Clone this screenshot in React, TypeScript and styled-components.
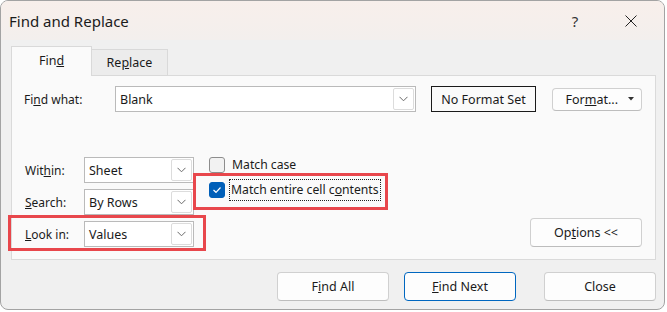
import React from "react";
import { styled, createGlobalStyle } from "styled-components";

const GlobalStyle = createGlobalStyle`
    html, body {
        margin: 0;
        padding: 0;
        background: #ffffff;
    }
    body {
        font-family: "Segoe UI", "Noto Sans", "Open Sans", sans-serif;
        font-size: 12px;
        color: #1a1a1a;
    }
`;

const Window = styled.div`
    width: 665px;
    height: 310px;
    box-sizing: border-box;
    border: 1px solid #a3a3a3;
    border-radius: 8px;
    background: #f0f0f0;
    overflow: hidden;
    display: flex;
    flex-direction: column;
`;

const TitleBar = styled.div`
    height: 39px;
    flex: none;
    display: flex;
    align-items: center;
    padding-left: 8px;
    background: linear-gradient(#f8efeb, #f3efed);
`;

const Title = styled.div`
    font-size: 15px;
    flex: 1;
    color: #1b1b1b;
`;

const TitleButton = styled.div<{ w: number }>`
    width: ${(p) => p.w}px;
    height: 39px;
    display: flex;
    align-items: center;
    justify-content: center;
    font-size: 15px;
    color: #333;
`;

const Body = styled.div`
    flex: 1;
    display: flex;
    flex-direction: column;
    padding: 0 8px 0 10px;
`;

const TabRow = styled.div`
    height: 36px;
    display: flex;
    align-items: flex-end;
    position: relative;
    z-index: 1;
    margin-bottom: -1px;
`;

const Tab = styled.div<{ active?: boolean; w: number }>`
    width: ${(p) => p.w}px;
    height: ${(p) => (p.active ? 30 : 27)}px;
    box-sizing: border-box;
    display: flex;
    align-items: center;
    justify-content: center;
    padding-bottom: ${(p) => (p.active ? 2 : 1)}px;
    border: 1px solid #d9d9d9;
    border-bottom: ${(p) => (p.active ? "none" : "1px solid #d9d9d9")};
    border-left: ${(p) => (p.active ? "1px solid #d9d9d9" : "none")};
    background: ${(p) => (p.active ? "#fafafa" : "#ececec")};
    font-size: 12.5px;
`;

const Panel = styled.div`
    height: 185px;
    box-sizing: border-box;
    border: 1px solid #dadada;
    background: #fafafa;
    padding: 10px 13px 12px 11px;
    display: flex;
    flex-direction: column;
`;

const FindRow = styled.div`
    display: flex;
    align-items: center;
`;

const Label = styled.div<{ w: number }>`
    width: ${(p) => p.w}px;
    flex: none;
    padding-left: 1px;
`;

const Combo = styled.div<{ w: number }>`
    width: ${(p) => p.w}px;
    height: 26px;
    box-sizing: border-box;
    border: 1px solid #bababa;
    background: #ffffff;
    display: flex;
    align-items: stretch;
    flex: none;
`;

const ComboText = styled.div`
    flex: 1;
    display: flex;
    align-items: center;
    padding-left: 4px;
    font-size: 12.5px;
`;

const DropButton = styled.div`
    width: 19px;
    margin: 1px;
    border: 1px solid #dcdcdc;
    border-radius: 2px;
    display: flex;
    align-items: center;
    justify-content: center;
`;

const FormatBox = styled.div`
    width: 105px;
    height: 26px;
    box-sizing: border-box;
    margin-left: 15px;
    border: 1px solid #1a1a1a;
    display: flex;
    align-items: center;
    justify-content: center;
    font-size: 12.5px;
`;

const Button = styled.div<{ w: number; h: number; primary?: boolean }>`
    width: ${(p) => p.w}px;
    height: ${(p) => p.h}px;
    box-sizing: border-box;
    border: 1px solid ${(p) => (p.primary ? "#0067c0" : "#d0d0d0")};
    border-bottom-color: ${(p) => (p.primary ? "#0067c0" : "#bdbdbd")};
    border-radius: 4px;
    background: #fdfdfd;
    display: flex;
    align-items: center;
    justify-content: center;
    font-size: 12.5px;
    flex: none;
`;

const FormatButton = styled(Button)`
    margin-left: 16px;
    justify-content: flex-end;
    padding-right: 7px;
    gap: 10px;
`;

const Lower = styled.div`
    margin-top: auto;
    display: flex;
    align-items: flex-end;
`;

const FieldColumn = styled.div`
    display: flex;
    flex-direction: column;
    gap: 6px;
    padding-left: 1px;
`;

const FieldRow = styled.div<{ highlight?: boolean }>`
    display: flex;
    align-items: center;
    position: relative;
    ${(p) =>
        p.highlight &&
        `
        &::after {
            content: "";
            position: absolute;
            top: -6px;
            left: -16px;
            right: -12px;
            bottom: -4px;
            border: 3px solid #e8474c;
            pointer-events: none;
        }
    `}
`;

const CheckColumn = styled.div`
    align-self: flex-start;
    margin-left: 15px;
    display: flex;
    flex-direction: column;
    align-items: flex-start;
    gap: 9px;
`;

const CheckRow = styled.div<{ highlight?: boolean }>`
    display: inline-flex;
    align-items: center;
    height: 16px;
    position: relative;
    ${(p) =>
        p.highlight &&
        `
        &::after {
            content: "";
            position: absolute;
            top: -9px;
            left: -16px;
            right: -7px;
            bottom: -12px;
            border: 3px solid #e8474c;
            pointer-events: none;
        }
    `}
`;

const Box = styled.div<{ checked?: boolean }>`
    width: 16px;
    height: 16px;
    box-sizing: border-box;
    border-radius: 3px;
    border: 1px solid ${(p) => (p.checked ? "#005fb8" : "#8d8d8d")};
    background: ${(p) => (p.checked ? "#005fb8" : "#f2f2f2")};
    display: flex;
    align-items: center;
    justify-content: center;
    flex: none;
`;

const CheckText = styled.div<{ focused?: boolean }>`
    margin-left: ${(p) => (p.focused ? 4 : 5)}px;
    padding: 1px 1px 2px;
    border: 1px dotted ${(p) => (p.focused ? "#222" : "transparent")};
    font-size: 12.2px;
    white-space: nowrap;
`;

const Spacer = styled.div`
    flex: 1;
`;

const Footer = styled.div`
    display: flex;
    justify-content: flex-end;
    padding-top: 12px;
`;

const Gap = styled.div<{ w: number }>`
    width: ${(p) => p.w}px;
    flex: none;
`;

function Chevron() {
    return (
        <svg width="9" height="6" viewBox="0 0 9 6">
            <polyline points="0.5,0.8 4.5,4.8 8.5,0.8" fill="none" stroke="#6a6a6a" strokeWidth="1" />
        </svg>
    );
}

function ComboBox({ w, value }: { w: number; value: string }) {
    return (
        <Combo w={w}>
            <ComboText>{value}</ComboText>
            <DropButton>
                <Chevron />
            </DropButton>
        </Combo>
    );
}

function Check({ checked }: { checked?: boolean }) {
    return (
        <Box checked={checked}>
            {checked && (
                <svg width="10" height="8" viewBox="0 0 10 8">
                    <polyline points="1.5,4 4,6.3 8.5,1.5" fill="none" stroke="#fff" strokeWidth="1.2" />
                </svg>
            )}
        </Box>
    );
}

export default function App() {
    return (
        <>
            <GlobalStyle />
            <Window>
                <TitleBar>
                    <Title>Find and Replace</Title>
                    <TitleButton w={46}>?</TitleButton>
                    <TitleButton w={66}>
                        <svg width="12" height="12" viewBox="0 0 12 12">
                            <path d="M0.5 0.5 L11.5 11.5 M11.5 0.5 L0.5 11.5" stroke="#222" strokeWidth="1" />
                        </svg>
                    </TitleButton>
                </TitleBar>
                <Body>
                    <TabRow>
                        <Tab active w={81}>
                            <span>
                                Fin<u>d</u>
                            </span>
                        </Tab>
                        <Tab w={76}>
                            <span>
                                Re<u>p</u>lace
                            </span>
                        </Tab>
                    </TabRow>
                    <Panel>
                        <FindRow>
                            <Label w={91}>
                                Fi<u>n</u>d what:
                            </Label>
                            <ComboBox w={301} value="Blank" />
                            <FormatBox>No Format Set</FormatBox>
                            <FormatButton w={90} h={23}>
                                <span>
                                    For<u>m</u>at...
                                </span>
                                <svg width="6" height="4" viewBox="0 0 6 4">
                                    <path d="M0 0 H6 L3 3.5 Z" fill="#333" />
                                </svg>
                            </FormatButton>
                        </FindRow>
                        <Lower>
                            <FieldColumn>
                                <FieldRow>
                                    <Label w={59}>
                                        Wit<u>h</u>in:
                                    </Label>
                                    <ComboBox w={110} value="Sheet" />
                                </FieldRow>
                                <FieldRow>
                                    <Label w={59}>
                                        <u>S</u>earch:
                                    </Label>
                                    <ComboBox w={110} value="By Rows" />
                                </FieldRow>
                                <FieldRow highlight>
                                    <Label w={59}>
                                        <u>L</u>ook in:
                                    </Label>
                                    <ComboBox w={110} value="Values" />
                                </FieldRow>
                            </FieldColumn>
                            <CheckColumn>
                                <CheckRow>
                                    <Check />
                                    <CheckText>Match case</CheckText>
                                </CheckRow>
                                <CheckRow highlight>
                                    <Check checked />
                                    <CheckText focused>
                                        Match entire cell c<u>o</u>ntents
                                    </CheckText>
                                </CheckRow>
                            </CheckColumn>
                            <Spacer />
                            <Button w={112} h={29}>
                                <span>
                                    Op<u>t</u>ions &lt;&lt;
                                </span>
                            </Button>
                        </Lower>
                    </Panel>
                    <Footer>
                        <Button w={112} h={29}>
                            <span>
                                F<u>i</u>nd All
                            </span>
                        </Button>
                        <Gap w={15} />
                        <Button w={112} h={29} primary>
                            <span>
                                <u>F</u>ind Next
                            </span>
                        </Button>
                        <Gap w={28} />
                        <Button w={112} h={29}>
                            Close
                        </Button>
                    </Footer>
                </Body>
            </Window>
        </>
    );
}
